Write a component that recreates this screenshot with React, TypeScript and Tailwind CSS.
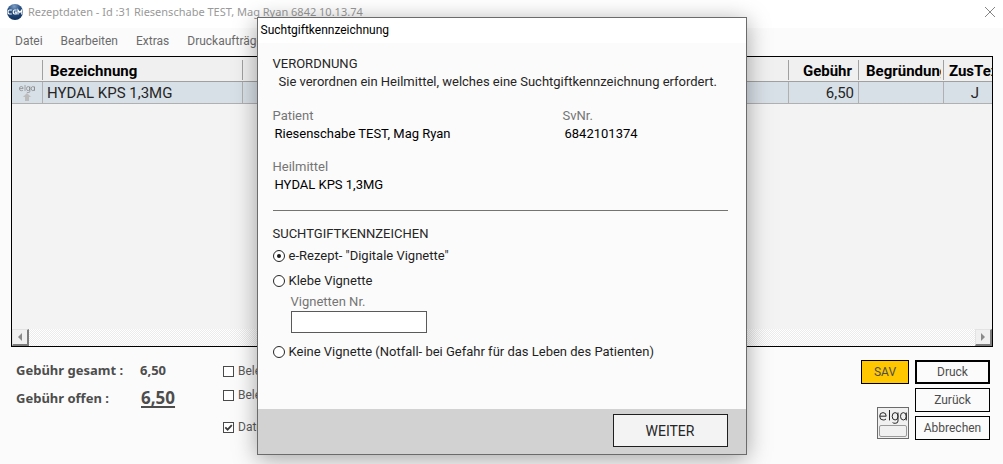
import type { ReactNode } from "react";

const menuItems = ["Datei", "Bearbeiten", "Extras", "Druckaufträge"];

function CgmLogo() {
  return (
    <svg viewBox="0 0 16 16" className="size-4 shrink-0" role="img" aria-label="CGM">
      <defs>
        <radialGradient id="globe" cx="0.45" cy="0.15" r="0.9">
          <stop offset="0" stopColor="#7f9fc4" />
          <stop offset="0.4" stopColor="#2b5488" />
          <stop offset="1" stopColor="#0c2c56" />
        </radialGradient>
      </defs>
      <circle cx="8" cy="8" r="8" fill="url(#globe)" />
      <g fill="none" stroke="#ffffff" strokeWidth="1.2">
        <path d="M4.8 6H2.4Q1 6 1 8T2.4 10H4.8" />
        <path d="M9.6 6H7.6Q6.2 6 6.2 8T7.6 10H9.2V8.2H7.8" />
        <path d="M11 10.6V6L12.9 8.6L14.8 6V10.6" />
      </g>
    </svg>
  );
}

function ElgaMark({ className }: { className: string }) {
  return (
    <svg viewBox="0 0 28 14" className={className} fill="none" stroke="currentColor" aria-hidden="true">
      <path d="M0.8 6.2H7.2Q7.2 2.6 4 2.6Q0.7 2.6 0.7 6.3Q0.7 10 4.2 10Q6 10 7 9" />
      <path d="M10.5 0V10.4" />
      <path d="M19 2.5V11Q19 13.3 16.2 13.3Q14.4 13.3 13.6 12.6M19 6.3Q19 2.6 16.1 2.6Q13.2 2.6 13.2 6.3Q13.2 10 16.1 10Q19 10 19 6.3" />
      <path d="M27.3 2.5V10.4M27.3 6.3Q27.3 2.6 24.3 2.6Q21.5 2.6 21.5 6.3Q21.5 10 24.3 10Q27.3 10 27.3 6.3" />
    </svg>
  );
}

function ScrollButton({ label, path }: { label: string; path: string }) {
  return (
    <button
      type="button"
      aria-label={label}
      className="flex size-[17px] items-center justify-center border border-r-2 border-b-2 border-t-[#e3e3e3] border-l-[#e3e3e3] border-r-[#7c7c7c] border-b-[#7c7c7c] bg-[#f0f0f0]"
    >
      <svg viewBox="0 0 4 8" className="h-2 w-1" fill="#8b8b8b" aria-hidden="true">
        <path d={path} />
      </svg>
    </button>
  );
}

function Check({ children, checked = false }: { children: ReactNode; checked?: boolean }) {
  return (
    <label className="flex h-4 items-center gap-1 text-[#5a5a5a]">
      <span className="grid size-[11px] shrink-0">
        <input
          type="checkbox"
          defaultChecked={checked}
          className="peer col-start-1 row-start-1 size-[11px] appearance-none border border-[#4a4a4a] bg-white"
        />
        <svg
          viewBox="0 0 11 11"
          className="pointer-events-none invisible col-start-1 row-start-1 size-[11px] peer-checked:visible"
          fill="none"
          stroke="#3c3c3c"
          strokeWidth="1.8"
          aria-hidden="true"
        >
          <path d="M2.3 5.3L4.6 7.6L8.8 3.2" />
        </svg>
      </span>
      {children}
    </label>
  );
}

function Radio({ children, checked = false }: { children: ReactNode; checked?: boolean }) {
  return (
    <label className="flex h-[18px] items-center gap-1 text-[#1f1f1f]">
      <span className="grid size-3 shrink-0 place-items-center">
        <input
          type="radio"
          name="kennzeichen"
          defaultChecked={checked}
          className="peer col-start-1 row-start-1 size-3 appearance-none rounded-full border border-[#262626] bg-white"
        />
        <span className="pointer-events-none invisible col-start-1 row-start-1 size-1 rounded-full bg-[#1a1a1a] peer-checked:visible" />
      </span>
      {children}
    </label>
  );
}

function Field({ label, value }: { label: string; value: string }) {
  return (
    <div>
      <dt className="text-[#757575]">{label}</dt>
      <dd className="pl-0.5 text-black">{value}</dd>
    </div>
  );
}

function PrescriptionTable() {
  const head = "relative h-6 border-b border-[#a0a0a0] px-[7px] pt-1 text-left font-bold whitespace-nowrap";
  const split = "after:absolute after:right-0 after:top-[3px] after:bottom-px after:w-px after:bg-[#a0a0a0]";
  const cell = "h-[22px] border-r border-b border-[#b0b0b0] px-1";
  return (
    <div className="mr-[10px] ml-[11px] flex flex-1 flex-col border border-black bg-[#f3f3f3]">
      <table className="w-full table-fixed border-separate border-spacing-0 text-[15px] leading-5">
        <colgroup>
          <col className="w-[31px]" />
          <col className="w-[200px]" />
          <col />
          <col className="w-[70px]" />
          <col className="w-[85px]" />
          <col className="w-12" />
        </colgroup>
        <thead className="bg-[#f0f0f0] text-black">
          <tr>
            <th className={`${head} ${split}`} />
            <th className={`${head} ${split}`}>Bezeichnung</th>
            <th className={`${head} ${split}`} />
            <th className={`${head} ${split}`}>
              <div className="text-right">Gebühr</div>
            </th>
            <th className={`${head} ${split}`}>
              <div className="-mr-1 overflow-hidden">Begründung</div>
            </th>
            <th className="h-6 overflow-hidden border-b border-[#a0a0a0] pt-1 pl-[5px] text-left font-bold whitespace-nowrap">
              ZusText
            </th>
          </tr>
        </thead>
        <tbody className="bg-[#d8e0e7] text-[#262626]">
          <tr>
            <td className="h-[22px] border-r border-b border-[#b0b0b0]">
              <div className="flex flex-col items-center text-[#707070]">
                <ElgaMark className="h-2 w-4" />
                <svg viewBox="0 0 8 8" className="size-2" fill="#bcbcbc" aria-hidden="true">
                  <path d="M4 0L8 4H6V8H2V4H0Z" />
                </svg>
              </div>
            </td>
            <td className={cell}>HYDAL KPS 1,3MG</td>
            <td className={cell} />
            <td className={`${cell} text-right`}>6,50</td>
            <td className={cell} />
            <td className="h-[22px] border-b border-[#b0b0b0] pr-0 pl-3.5 text-center">J</td>
          </tr>
        </tbody>
      </table>
      <div className="mt-auto flex justify-between bg-[repeating-conic-gradient(#ffffff_0_25%,#ececec_0_50%)] bg-[length:2px_2px]">
        <ScrollButton label="Nach links" path="M4 0V8L0 4Z" />
        <ScrollButton label="Nach rechts" path="M0 0V8L4 4Z" />
      </div>
    </div>
  );
}

function SummaryBar() {
  const button = "flex h-6 items-center justify-center border border-black text-[#4d4d4d]";
  return (
    <footer className="flex justify-between pt-[13px] pr-[13px] pb-6 pl-4">
      <div className="flex">
        <dl className="grid w-[207px] grid-cols-[124px_auto] content-start font-['Noto_Sans','Open_Sans',sans-serif] text-[13px] font-bold text-[#4d4d4d]">
          <dt className="leading-5">Gebühr gesamt :</dt>
          <dd className="leading-5">6,50</dd>
          <dt className="leading-9">Gebühr offen :</dt>
          <dd className="pl-px text-[17px] leading-9 underline decoration-2 underline-offset-2">6,50</dd>
        </dl>
        <div className="flex flex-col gap-2 pt-[3px] text-xs">
          <Check>Beleg drucken</Check>
          <Check>Beleg senden</Check>
          <div className="pt-2">
            <Check checked>Datum drucken</Check>
          </div>
        </div>
      </div>
      <div className="flex gap-1.5 text-xs">
        <div className="flex w-12 flex-col items-end justify-between pb-px">
          <button type="button" className={`${button} w-full bg-[#ffc700]`}>
            SAV
          </button>
          <button
            type="button"
            aria-label="elga"
            className="flex size-8 flex-col items-center justify-between border border-[#6b6b6b] bg-[#f0f0f0] px-px pt-0.5 pb-px text-[#262626]"
          >
            <ElgaMark className="h-3.5 w-7" />
            <span className="h-3 w-7 rounded-xs border border-[#9a9a9a]" />
          </button>
        </div>
        <div className="flex w-[75px] flex-col gap-1">
          <button type="button" className="flex h-6 items-center justify-center border-2 border-black text-[#4d4d4d]">
            Druck
          </button>
          <button type="button" className={button}>Zurück</button>
          <button type="button" className={button}>Abbrechen</button>
        </div>
      </div>
    </footer>
  );
}

function NarcoticDialog() {
  return (
    <section
      role="dialog"
      aria-labelledby="dialog-title"
      className="absolute top-[17px] left-1/2 flex w-[490px] -translate-x-1/2 flex-col border border-[#6b6b6b] bg-[#fbfbfb] shadow-[0_4px_22px_rgba(0,0,0,0.35)]"
    >
      <h2 id="dialog-title" className="h-[25px] bg-white pl-[3px] text-xs leading-6 text-black">
        Suchtgiftkennzeichnung
      </h2>
      <div className="pt-3 pr-[18px] pb-12 pl-[15px] text-[13px] leading-[18px] text-[#262626]">
        <h3>VERORDNUNG</h3>
        <p className="pl-1.5">Sie verordnen ein Heilmittel, welches eine Suchtgiftkennzeichnung erfordert.</p>
        <dl className="grid grid-cols-[290px_1fr] gap-y-[15px] pt-4">
          <Field label="Patient" value="Riesenschabe TEST, Mag Ryan" />
          <Field label="SvNr." value="6842101374" />
          <Field label="Heilmittel" value="HYDAL KPS 1,3MG" />
        </dl>
        <hr className="mt-4 mb-3.5 border-[#757570]" />
        <fieldset>
          <legend>SUCHTGIFTKENNZEICHEN</legend>
          <div className="pt-1">
            <Radio checked>e-Rezept- "Digitale Vignette"</Radio>
          </div>
          <div className="pt-[7px]">
            <Radio>Klebe Vignette</Radio>
          </div>
          <div className="flex flex-col items-start pt-[3px] pb-2.5 pl-[18px]">
            <label htmlFor="vignette" className="text-[#757575]">
              Vignetten Nr.
            </label>
            <input id="vignette" type="text" className="h-[22px] w-[136px] border border-[#5a5a5a] bg-white px-1 outline-none" />
          </div>
          <Radio>Keine Vignette (Notfall- bei Gefahr für das Leben des Patienten)</Radio>
        </fieldset>
      </div>
      <div className="flex justify-end bg-[#d2d2d2] pt-[5px] pr-[18px] pb-[7px]">
        <button type="button" className="h-[33px] w-[115px] border border-[#1f1f1f] bg-[#f3f3f3] text-sm text-[#262626]">
          WEITER
        </button>
      </div>
    </section>
  );
}

export default function App() {
  return (
    <main className="relative flex min-h-screen flex-col overflow-hidden bg-[#fbfbfb] font-[Roboto,sans-serif]">
      <header className="flex h-7 items-center justify-between bg-white pr-2 pb-1 pl-[7px]">
        <div className="flex items-center gap-[5px]">
          <CgmLogo />
          <h1 className="font-['Noto_Sans','Open_Sans',sans-serif] text-[11px] text-[#999999]">
            Rezeptdaten - Id :31 Riesenschabe TEST, Mag Ryan 6842 10.13.74
          </h1>
        </div>
        <button type="button" aria-label="Schließen">
          <svg viewBox="0 0 10 10" className="size-2.5" stroke="#858585" strokeWidth="1" aria-hidden="true">
            <path d="M0 0L10 10M10 0L0 10" />
          </svg>
        </button>
      </header>
      <nav className="flex h-7 items-center gap-[18px] pl-[15px] text-xs text-[#6b6b6b]">
        {menuItems.map((item) => (
          <button key={item} type="button" className="h-6 pb-0.5">
            {item}
          </button>
        ))}
      </nav>
      <PrescriptionTable />
      <SummaryBar />
      <NarcoticDialog />
    </main>
  );
}
